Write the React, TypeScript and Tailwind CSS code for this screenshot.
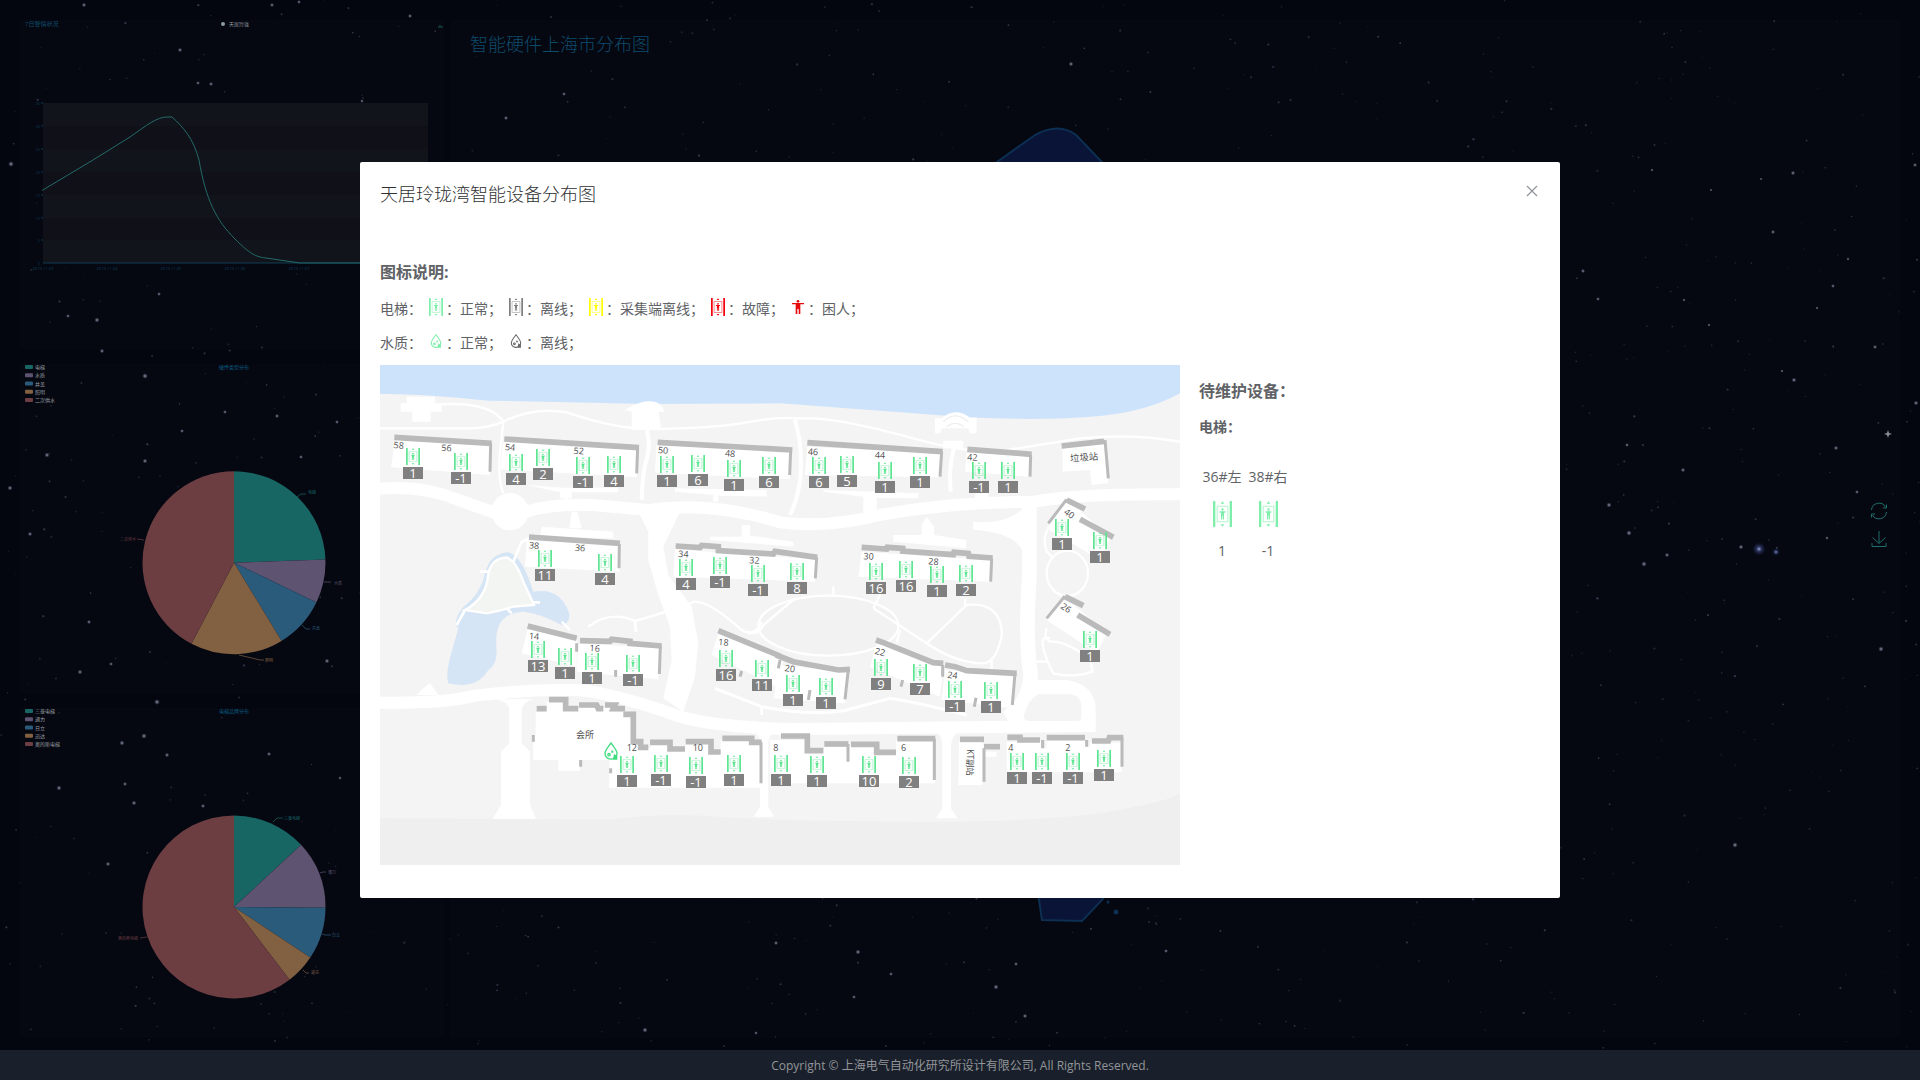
import React from "react";

const FONT = "font-['Open_Sans','Noto_Sans_CJK_SC',sans-serif]";

/* ---------- icons ---------- */

function ElevatorIcon({ className }: { className: string }) {
  return (
    <svg viewBox="0 0 57 76" preserveAspectRatio="none" className={className} fill="currentColor" aria-hidden="true">
      <rect x="0" y="0" width="7" height="76" />
      <rect x="50" y="0" width="7" height="76" />
      <path d="M11 14H46V62H11ZM14 17V59H43V17Z" opacity="0.6" />
      <path d="M28.5 1L34 8H23ZM28.5 75L34 68H23Z" />
      <circle cx="28.500" cy="25" r="3.500" />
      <path d="M20 30H37V34H33V54H29.500V43H27.500V54H24V34H20Z" />
    </svg>
  );
}

function DropIcon({ className }: { className: string }) {
  return (
    <svg viewBox="0 0 42 54" className={className} fill="none" stroke="currentColor" strokeWidth="4" aria-hidden="true">
      <path d="M21 3C11 16 3 25 3 34A17 17 0 0 0 21 51.500A17 17 0 0 0 39 34C39 25 31 16 21 3Z" />
      <circle cx="15" cy="38" r="3.500" />
      <circle cx="25" cy="29" r="1.500" />
      <path d="M30 36L40 42V53H27Z" fill="currentColor" stroke="none" />
    </svg>
  );
}

function PersonIcon({ className }: { className: string }) {
  return (
    <svg viewBox="0 0 36 42" className={className} fill="currentColor" aria-hidden="true">
      <circle cx="18" cy="4" r="4" />
      <path d="M0 9H36V13H25V42H20V27H16V42H11V13H0Z" />
    </svg>
  );
}

/* ---------- background sky ---------- */

const KNOWN_STARS: [number, number, number][] = [
  [1583, 271, 1.4], [1793, 173, 1.5], [1773, 232, 1.4], [1761, 179, 1], [1711, 190, 1], [1833, 286, 1.3],
  [1817, 308, 1.1], [1794, 380, 1.6], [1782, 371, 1.1], [1875, 347, 1.4], [1836, 448, 1.5], [1627, 445, 1.3],
  [1683, 470, 1.5], [1609, 505, 1.7], [1629, 533, 1.8], [1667, 555, 1.5], [1644, 564, 1.8], [1741, 547, 1.6],
  [1857, 492, 1.3], [1827, 538, 1.2], [1916, 403, 1.6], [1684, 300, 1.1], [1709, 325, 1.1], [1598, 299, 1.3],
  [1848, 259, 1.1], [1652, 170, 1.1], [1915, 165, 1.4], [180, 50, 1.5], [84, 5, 1.5], [272, 5, 1.4],
  [299, 2, 1.3], [410, 16, 1.4], [198, 83, 1.3], [211, 84, 1.4], [88, 106, 1.5], [142, 137, 1.2], [192, 150, 1.6],
  [261, 194, 1.4], [11, 164, 1.9], [59, 231, 1.8], [97, 320, 1.7], [68, 316, 1.3], [349, 141, 1.2], [311, 105, 1.3],
  [362, 101, 1.2], [159, 294, 1.3], [207, 219, 1.3], [145, 376, 1.9], [102, 351, 1.5], [225, 412, 1.3],
  [277, 416, 1.4], [337, 422, 1.3], [301, 457, 1.3], [145, 461, 1.6], [47, 455, 1.7], [10, 488, 1.7], [30, 534, 1.5],
  [89, 622, 1.4], [111, 664, 1.3], [80, 672, 1.6], [327, 661, 1.6], [182, 431, 1.3], [157, 702, 1.9], [144, 736, 1.8],
  [122, 743, 1.7], [167, 755, 1.5], [59, 788, 1.7], [134, 803, 1.6], [203, 806, 1.4], [125, 784, 1.4],
  [108, 864, 1.5], [269, 754, 1.4], [340, 778, 1.2], [858, 952, 1.7], [996, 987, 1.7], [776, 943, 1.4],
  [891, 974, 1.3], [1016, 964, 1.3], [854, 997, 1.3], [756, 1033, 1.2], [1166, 951, 1.3], [645, 1030, 1.7],
  [1735, 845, 1.8], [1881, 649, 1.8], [1025, 1016, 1.5], [1071, 64, 1.6], [564, 94, 1.3], [506, 118, 1.4],
];

function makeStars(count: number): [number, number, number, number][] {
  let seed = 20191;
  const next = () => {
    seed = (seed * 16807) % 2147483647;
    return seed / 2147483647;
  };
  return Array.from({ length: count }, () => [next() * 1920, next() * 1050, 0.5 + next() * 0.7, 0.15 + next() * 0.4]);
}

const DUST = makeStars(1300);

function Sky() {
  return (
    <svg
      className="absolute inset-0 h-full w-full"
      viewBox="0 0 1920 1080"
      preserveAspectRatio="xMidYMid slice"
      aria-hidden="true"
    >
      <defs>
        <radialGradient id="star">
          <stop offset="0" stopColor="#9aa1b2" />
          <stop offset="0.4" stopColor="#626a7c" stopOpacity="0.7" />
          <stop offset="1" stopColor="#3a4256" stopOpacity="0" />
        </radialGradient>
        <radialGradient id="nebula">
          <stop offset="0" stopColor="#9aa6d0" />
          <stop offset="0.35" stopColor="#3a4680" stopOpacity="0.7" />
          <stop offset="1" stopColor="#141c44" stopOpacity="0" />
        </radialGradient>
      </defs>
      {DUST.map(([x, y, r, o], i) => (
        <circle key={i} cx={x} cy={y} r={r} fill="#5a6580" opacity={o} />
      ))}
      {KNOWN_STARS.map(([x, y, r], i) => (
        <circle key={i} cx={x} cy={y} r={r * 1.6} fill="url(#star)" />
      ))}
      <circle cx="1759" cy="549" r="7" fill="url(#nebula)" />
      <circle cx="1776" cy="552" r="4" fill="url(#nebula)" />
      <path d="M1888 430L1889 433L1892 434L1889 435L1888 438L1887 435L1884 434L1887 433Z" fill="#8b8f98" />
    </svg>
  );
}

/* ---------- charts ---------- */

const PANEL = "rounded-sm bg-white/[0.008]";

function LineChart() {
  const bands = [103, 126, 149, 172, 195, 218, 240];
  const days = ["03", "04", "05", "06", "07"];
  return (
    <section className={PANEL}>
      <svg viewBox="20 20 424 330" className={`block w-full ${FONT}`} role="img" aria-label="7日警情状况">
        <text x="25" y="26" fontSize="6" fill="#0f4f6e">7日警情状况</text>
        <circle cx="223" cy="24" r="2" fill="#8d9c9c" />
        <text x="229" y="26" fontSize="5" fill="#9a9fa2">天居玲珑</text>
        <path d="M438 27H443M440 25V26" stroke="#1d5a58" strokeWidth="1" />
        {bands.map((y, i) => (
          <rect key={y} x="43" y={y} width="385" height="23" fill={i % 2 ? "#0f1018" : "#12141b"} />
        ))}
        {bands.map((y, i) => (
          <g key={y}>
            <path d={`M41 ${y}H43`} stroke="#0c3a56" />
            <text x="40" y={y + 2} fontSize="4" textAnchor="end" fill="#0c3a56">{35 - i * 5}</text>
          </g>
        ))}
        <text x="40" y="265" fontSize="4" textAnchor="end" fill="#0c3a56">0</text>
        <path d="M43 263H428" fill="none" stroke="#0f3c50" />
        {days.map((d, i) => (
          <text key={d} x={43 + i * 64} y="270" fontSize="4" textAnchor="middle" fill="#0f4259">2019-11-{d}</text>
        ))}
        <path
          d="M42 190.500L93 160L130 137C147 125 157 117 167 117L172 117C184 128 193 138 199 160C206 200 216 220 235 239C250 254 256 257 266 258L300 263H428"
          fill="none"
          stroke="#236a68"
        />
      </svg>
    </section>
  );
}

type Slice = { name: string; color: string; to: number; line: string; x: number; y: number };

function point(cx: number, cy: number, r: number, deg: number) {
  const a = ((deg - 90) * Math.PI) / 180;
  return `${(cx + r * Math.cos(a)).toFixed(2)} ${(cy + r * Math.sin(a)).toFixed(2)}`;
}

function PieChart({ title, slices, top, cy }: { title: string; slices: Slice[]; top: number; cy: number }) {
  return (
    <section className={PANEL}>
      <svg viewBox={`20 ${top} 424 330`} className={`block w-full ${FONT}`} role="img" aria-label={title}>
        {slices.map((s, i) => (
          <g key={s.name}>
            <rect x="25" y={top + 1 + i * 8.25} width="8" height="4" rx="1" fill={s.color} />
            <text x="35" y={top + 5 + i * 8.25} fontSize="5" fill="#9a9fa2">{s.name}</text>
          </g>
        ))}
        <text x="234" y={top + 5} fontSize="5" textAnchor="middle" fill="#0b5f84">{title}</text>
        {slices.map((s, i) => {
          const from = i ? slices[i - 1].to : 0;
          const large = s.to - from > 180 ? 1 : 0;
          return (
            <g key={s.name}>
              <path
                d={`M234 ${cy}L${point(234, cy, 91.5, from)}A91.5 91.5 0 ${large} 1 ${point(234, cy, 91.5, s.to)}Z`}
                fill={s.color}
              />
              <path d={s.line} fill="none" stroke={s.color} strokeWidth="0.7" />
              <text x={s.x} y={s.y} fontSize="4" fill={s.color}>{s.name}</text>
            </g>
          );
        })}
      </svg>
    </section>
  );
}

const TYPES: Slice[] = [
  { name: "电梯", color: "#186664", to: 88, line: "M297 497L301 494H306", x: 308, y: 494 },
  { name: "水质", color: "#5e5370", to: 115.8, line: "M324 582H331", x: 334, y: 585 },
  { name: "井盖", color: "#2b5b7b", to: 148.7, line: "M302 625L306 629H310", x: 312, y: 630 },
  { name: "照明", color: "#826042", to: 207.7, line: "M239 655L260 660H264", x: 265, y: 662 },
  { name: "二次供水", color: "#6c3e42", to: 360, line: "M144 540L137 539", x: 120, y: 541 },
];

const BRANDS: Slice[] = [
  { name: "三菱电梯", color: "#186664", to: 47.2, line: "M273 822L277 818H283", x: 284, y: 820 },
  { name: "通力", color: "#5e5370", to: 90.4, line: "M320 873L323 872H326", x: 328, y: 874 },
  { name: "日立", color: "#2b5b7b", to: 123.5, line: "M322 934L325 935H331", x: 332, y: 937 },
  { name: "迅达", color: "#826042", to: 142.6, line: "M303 970L306 973H309", x: 311, y: 974 },
  { name: "奥的斯电梯", color: "#6c3e42", to: 360, line: "M147 937L140 938", x: 118, y: 940 },
];

/* ---------- estate map ---------- */

const DEVICES: [number, number, string][] = [
  [23, 102, "1"], [71, 107, "-1"], [126, 108, "4"], [153, 103, "2"], [193, 111, "-1"], [224, 110, "4"],
  [277, 110, "1"], [308, 109, "6"], [344, 114, "1"], [379, 111, "6"], [155, 204, "11"], [215, 208, "4"],
  [296, 213, "4"], [330, 211, "-1"], [368, 219, "-1"], [407, 217, "8"], [429, 111, "6"], [457, 110, "5"],
  [495, 116, "1"], [530, 111, "1"], [589, 116, "-1"], [618, 116, "1"], [486, 217, "16"], [516, 215, "16"],
  [547, 220, "1"], [576, 219, "2"], [672, 173, "1"], [710, 186, "1"], [148, 295, "13"], [175, 302, "1"],
  [202, 307, "1"], [243, 309, "-1"], [336, 304, "16"], [372, 314, "11"], [403, 329, "1"], [436, 332, "1"],
  [491, 313, "9"], [530, 318, "7"], [565, 335, "-1"], [601, 336, "1"], [700, 285, "1"], [237, 410, "1"],
  [271, 409, "-1"], [306, 411, "-1"], [344, 409, "1"], [391, 409, "1"], [427, 410, "1"], [479, 410, "10"],
  [519, 411, "2"], [627, 407, "1"], [652, 407, "-1"], [683, 407, "-1"], [714, 404, "1"],
];

const LABELS: [number, number, string, number][] = [
  [40, 249, "58", 5], [183, 257, "56", 5], [374, 255, "54", 5], [580, 266, "52", 5], [833, 264, "50", 5],
  [1034, 274, "48", 5], [446, 550, "38", 5], [584, 557, "36", 5], [894, 576, "34", 3], [1107, 595, "32", 3],
  [1283, 269, "46", 3], [1484, 279, "44", 3], [1761, 286, "42", 3], [1450, 583, "30", 3], [1644, 598, "28", 5],
  [2050, 445, "40", 35], [2040, 728, "26", 35], [446, 822, "14", 5], [628, 858, "16", 5], [1014, 840, "18", 5],
  [1213, 918, "20", 8], [1483, 866, "22", 15], [1701, 938, "24", 8], [740, 1158, "12", 0], [938, 1158, "10", 0],
  [1180, 1158, "8", 0], [1563, 1158, "6", 0], [1885, 1158, "4", 0], [2056, 1158, "2", 0],
];

const ROOFS = [
  /* north row */
  "M43 217L335 235", "M373 222L777 248", "M833 232L1237 255", "M1282 233L1688 260", "M1762 253L1955 268",
  "M2045 243L2172 229",
  /* middle row */
  "M447 516L720 535",
  "M887 543L960 548L965 541L1015 545L1015 557L1180 567L1185 559L1312 577",
  "M1445 547L1520 552L1522 547L1568 550L1568 558L1720 569L1722 562L1765 565L1767 574L1838 579",
  "M2060 405L2115 432", "M2100 463L2200 517", "M2055 695L2110 722", "M2093 750L2190 808",
  /* curved row */
  "M443 783L500 797L590 820", "M600 827L690 829L695 823L750 829L750 835L845 843",
  "M1015 797L1200 873", "M1188 870L1240 890L1375 915L1410 913",
  "M1488 825L1510 833L1660 893L1690 895", "M1695 900L1725 905L1760 917L1910 925",
  /* club house and south row */
  "M470 1031H500", "M507 1004H557V1031H595", "M597 1020H650L655 1031H670", "M675 1020H705L700 1031H735",
  "M730 1048H760V1130H782V1147H805",
  "M810 1132H870V1152H915", "M917 1130H993V1161H1022", "M1027 1120H1115V1132H1145",
  "M1203 1113H1282V1157H1330", "M1333 1137H1405", "M1413 1138H1490V1162H1548", "M1552 1121H1666",
  "M1740 1123H1812", "M1812 1145H1860", "M1882 1117H1920V1125H1980", "M2000 1118H2115", "M2136 1128H2185L2188 1118H2230",
];

const SIDES =
  "M332 235L330 320M773 248L770 325M1232 255L1229 330M1685 260L1680 335M1952 270L1950 335M2175 225L2185 340" +
  "M718 537L717 610M1310 577L1306 640M1835 580L1832 650M2005 475L2060 403M2000 760L2055 693" +
  "M841 843L838 927M1405 913L1395 1003M1905 925L1897 1020M1143 1132V1255M1404 1137V1190M1663 1121V1245" +
  "M1812 1150V1250M1988 1125V1150M2120 1125V1145M2226 1118V1205M590 835V860M1200 885L1195 910M1688 900V935" +
  "M460 1110V1130M602 1185V1205M692 1210V1225M707 915V935M1085 918L1080 935M1290 975L1285 1005M1568 945L1563 965M1788 998L1783 1025";

const BODIES = [
  "M45 225L335 240L330 330L33 307Z", "M370 230L775 250L770 337L360 313Z", "M830 240L1235 260L1230 343L825 323Z",
  "M1282 245L1688 265L1680 337L1275 330Z", "M1760 260L1955 275L1948 335L1755 320Z",
  "M2048 247L2172 235L2185 355L2135 360L2130 315L2048 320Z", "M440 525L720 537L718 620L435 605Z",
  "M885 553L1310 583L1305 650L880 635Z", "M1445 560L1835 585L1830 650L1435 635Z",
  "M2060 405L2110 445L2190 520L2160 585L2000 490Z", "M2050 700L2100 735L2180 805L2150 865L2000 765Z",
  "M443 793L590 825L590 905L425 865Z", "M595 835L840 850L835 943L590 920Z",
  "M1015 803L1210 885L1190 965L995 870Z", "M1200 900L1405 920L1395 1015L1180 1000Z",
  "M1490 835L1690 905L1680 995L1470 905Z", "M1695 915L1905 935L1895 1030L1685 1005Z",
  "M467 1040H500V1010H553V1035H595V1028H690V1040H735V1055H760V1185H600V1217H535V1185H460V1110H467Z",
  "M690 1135H790V1150H812V1137H870V1157H915V1135H993V1165H1022V1125H1145V1268H687Z",
  "M1170 1125H1280V1162H1332V1142H1490V1165H1548V1125H1665V1255H1170Z",
  "M1737 1130H1810V1160H1850V1175H1808V1260H1735Z", "M1880 1130H1985V1150H2000V1123H2115V1145H2130V1133H2225V1222H1880Z",
];

function SitePlan() {
  return (
    <svg viewBox="0 0 2400 1500" className={`absolute inset-0 h-full w-full ${FONT}`} role="img" aria-label="小区平面图">
      <defs>
        <filter id="soft" x="-2%" y="-2%" width="104%" height="104%">
          <feGaussianBlur stdDeviation="2" />
        </filter>
      </defs>
      <rect width="2400" height="1500" fill="#f4f4f4" />
      <path d="M0 0H2400V85Q2300 140 2160 153Q2000 168 1760 157L1200 115L805 117L325 107Q120 85 0 87Z" fill="#cde3fb" />
      <path d="M0 1360L700 1363Q885 1340 1050 1358L1245 1366L1600 1370Q1950 1372 2160 1345Q2370 1310 2400 1285V1500H0Z" fill="#efefef" />

      {/* ponds */}
      <path d="M315 625Q330 565 385 562Q425 570 460 680Q540 665 568 745Q570 775 545 780Q480 745 430 740C350 745 345 800 350 860Q350 900 325 915Q290 975 205 955Q195 930 215 860L235 790Q215 770 250 725Q300 690 315 625Z" fill="#d5e5f5" />
      <path d="M325 625Q335 580 380 577Q410 590 430 650L462 720L400 725Q350 740 320 745L255 735Q320 700 325 625Z" fill="#f3f5f3" stroke="#fff" strokeWidth="7" />
      <path d="M300 620H325M400 590L425 530L470 510M455 712H480M380 730L395 745M255 735L230 780" fill="none" stroke="#fff" strokeWidth="8" />

      {/* roads */}
      <g fill="none" stroke="#fff" strokeWidth="36">
        <path d="M0 371Q130 360 235 405L335 440H440Q520 415 635 420L805 435Q900 422 985 430Q1100 440 1200 472Q1340 490 1500 450Q1700 412 1960 410Q2100 385 2400 388" />
        <path d="M0 1013Q200 1015 285 992Q450 972 600 976Q700 985 885 1050Q1000 1088 1245 1092L2140 1083" />
        <path d="M1948 415V640Q1935 820 1952 930Q1950 1010 1880 1060" strokeWidth="44" />
      </g>
      <circle cx="390" cy="440" r="56" fill="#fff" />
      <path d="M770 430L805 500L805 585L835 690L870 785L875 885L850 1000L910 1040L945 935L955 835L935 725L865 630L850 545L900 440Z" fill="#fff" />
      <path d="M1780 470Q1880 480 1930 430V560Q1900 500 1780 495Z" fill="#fff" />
      <path d="M1965 945H2060Q2145 960 2147 1030V1100H1860Z" fill="#fff" />
      <path d="M1975 988H2070Q2104 992 2104 1025V1055Q2104 1068 2090 1068H1945Q1925 1065 1935 1040Q1950 1000 1975 988Z" fill="#f4f4f4" />
      <path d="M345 1003Q390 1010 388 1040V1135L363 1160V1320L338 1362H468L450 1320V1160L425 1135V1040Q425 1010 460 1003Z" fill="#fff" />
      <path d="M1125 1100Q1140 1115 1140 1130V1325L1120 1355H1182L1165 1325V1130Q1168 1110 1185 1100Z" fill="#fff" />
      <path d="M1670 1100Q1687 1115 1687 1140V1330L1668 1360H1732L1713 1330V1140Q1715 1115 1735 1100Z" fill="#fff" />

      {/* footpaths */}
      <g fill="none" stroke="#fff" strokeWidth="7">
        <path d="M0 190H260Q330 190 370 170Q330 110 185 118M370 170Q460 125 560 142Q700 190 805 192Q1000 190 1100 172T1245 160H1300Q1400 165 1600 220T1900 252L2100 220Q2260 205 2400 230" />
        <path d="M370 170L358 280Q355 350 370 385" />
        <path d="M800 195Q815 240 795 300Q785 360 785 405M1245 165Q1270 250 1260 350Q1250 410 1230 450M1725 240Q1705 300 1712 380" strokeWidth="12" />
        <ellipse cx="1345" cy="782" rx="210" ry="90" fill="#f2f2f2" />
        <path d="M1640 835L1760 720Q1860 710 1866 805Q1850 900 1800 895Q1720 890 1640 835Z" fill="#f2f2f2" />
        <path d="M1480 730L1640 835M1480 730L1505 680M1360 665V692M1560 795L1550 835M1755 700V720M1835 880V925" />
        <path d="M625 785Q690 735 765 768Q850 745 945 710Q990 710 1085 795Q1130 820 1150 780L1245 700M545 770L570 795M1145 770Q1130 810 1100 800" />
        <path d="M765 768L768 800M1005 970L1145 1025Q1300 1055 1400 1035L1530 1000Q1600 1010 1760 1050M1145 1025V1050" strokeWidth="9" />
        <ellipse cx="2062" cy="625" rx="62" ry="68" />
        <path d="M2005 490Q1985 520 2000 560L2020 580M2000 790Q1990 820 2010 830Q2050 825 2130 880L2138 920Q2080 940 2020 925Q2000 890 1990 850T2010 820M1965 890H2000" />
      </g>

      {/* pavilions and terraces */}
      <g fill="#fff">
        <path d="M80 95H165V115H185V140H152V170H97V140H62V115H80Z" />
        <path d="M735 135Q760 118 785 112Q805 105 830 112Q850 122 852 140H835L845 195H755V140Z" />
        <path d="M1665 160H1685Q1725 125 1770 158H1790V205H1770L1765 190H1685L1680 205H1665Z" />
        <path d="M485 485L700 500V520L480 515ZM575 440H592L605 490H568ZM540 370H575V400H562V410H552V400H540Z" />
        <path d="M885 370L1160 375V395L1015 392V410H1000V390L885 380ZM990 525V515H1085V480H1110V512L1240 530V545Z" />
        <path d="M1330 375L1615 385V400L1490 398V450H1450V395L1330 380ZM1540 520V510H1625V480L1640 455L1662 485V510L1758 525V550L1540 530Z" />
        <path d="M1690 227H1750V250H1690ZM1785 375H1825V410H1785ZM130 970L150 955L175 990H110Z" />
        <path d="M440 360L550 368H715V382H540Z" />
      </g>
      <path d="M1690 170Q1725 135 1765 170M1700 185Q1725 165 1752 185" fill="none" stroke="#eee" strokeWidth="4" />

      {/* buildings */}
      <g fill="#fff">
        {BODIES.map((d) => (
          <path key={d} d={d} />
        ))}
      </g>
      <g fill="none" stroke="#bababa" filter="url(#soft)">
        <path d={SIDES} strokeWidth="9" />
        {ROOFS.map((d) => (
          <path key={d} d={d} strokeWidth="17" />
        ))}
      </g>

      <g fill="#4f4f4f" fontSize="27">
        {LABELS.map(([x, y, t, r]) => (
          <text key={t} x={x} y={y} transform={`rotate(${r} ${x} ${y})`}>{t}</text>
        ))}
        <text x="588" y="1120">会所</text>
        <text x="2071" y="290" fontSize="28" transform="rotate(-4 2071 290)">垃圾站</text>
        <text x="1762" y="1153" fontSize="25" transform="rotate(90 1762 1153)">KT副站</text>
      </g>
    </svg>
  );
}

function EstateMap() {
  return (
    <div className="relative h-[500px] w-[800px] shrink-0 overflow-hidden">
      <SitePlan />
      {DEVICES.map(([x, y, floor]) => (
        <div
          key={`${x}-${y}`}
          className="absolute flex w-5 -translate-y-full flex-col items-center text-[#5ee592]"
          style={{ left: x, top: y + 12 }}
        >
          <ElevatorIcon className="mb-0.5 h-[17px] w-[14px]" />
          <span className="h-3 w-full bg-[#808080] text-center text-[13px] leading-3 text-white">{floor}</span>
        </div>
      ))}
      <DropIcon className="absolute top-[377px] left-[224px] h-[18px] w-[14px] text-[#3fdc7f]" />
    </div>
  );
}

/* ---------- dialog ---------- */

const GREEN = "text-[#7eefaa]";

function LegendItem({ children, label }: { children: React.ReactNode; label: string }) {
  return (
    <li className="flex">
      <span className="mr-[3px] ml-[7px] flex h-[30px] w-3.5 items-center justify-center">{children}</span>：{label}；
    </li>
  );
}

function PendingDevice({ name, floor }: { name: string; floor: string }) {
  return (
    <li className="flex w-[46px] flex-col items-center text-sm leading-6 whitespace-nowrap">
      <span>{name}</span>
      <ElevatorIcon className={`mt-3 mb-3 h-[26px] w-[19px] ${GREEN}`} />
      <span>{floor}</span>
    </li>
  );
}

function DeviceDialog() {
  return (
    <div
      role="dialog"
      aria-labelledby="dialog-title"
      className="w-5/8 min-w-[1060px] rounded-xs bg-white text-[#606266]"
    >
      <header className="flex items-start justify-between p-5 pb-2.5">
        <h2 id="dialog-title" className="text-lg leading-6 font-light text-[#303133]">天居玲珑湾智能设备分布图</h2>
        <button type="button" aria-label="关闭" className="mt-[3px] mr-0.5 text-[#909399]">
          <svg viewBox="0 0 12 12" className="h-3 w-3" stroke="currentColor" strokeWidth="1.200">
            <path d="M1 1L11 11M11 1L1 11" />
          </svg>
        </button>
      </header>
      <div className="px-5 pt-11 pb-[33px]">
        <h3 className="mb-2 text-base leading-6 font-bold">图标说明:</h3>
        <div className="flex text-sm leading-[34px]">
          <span>电梯：</span>
          <ul className="flex">
            <LegendItem label="正常"><ElevatorIcon className={`h-[18px] w-3.5 ${GREEN}`} /></LegendItem>
            <LegendItem label="离线"><ElevatorIcon className="h-[18px] w-3.5 text-[#808080]" /></LegendItem>
            <LegendItem label="采集端离线"><ElevatorIcon className="h-[18px] w-3.5 text-[#ffff00]" /></LegendItem>
            <LegendItem label="故障"><ElevatorIcon className="h-[18px] w-3.5 text-[#f5000c]" /></LegendItem>
            <LegendItem label="困人"><PersonIcon className="h-3.5 w-3 text-[#e60c0c]" /></LegendItem>
          </ul>
        </div>
        <div className="mb-[5px] flex text-sm leading-[34px]">
          <span>水质：</span>
          <ul className="flex">
            <LegendItem label="正常"><DropIcon className={`h-3.5 w-3 ${GREEN}`} /></LegendItem>
            <LegendItem label="离线"><DropIcon className="h-3.5 w-3 text-[#666]" /></LegendItem>
          </ul>
        </div>
        <div className="flex">
          <EstateMap />
          <aside className="pl-[19px]">
            <h3 className="mt-3.5 text-base leading-6 font-bold">待维护设备：</h3>
            <h4 className="mt-3 mb-[26px] text-sm leading-6 font-bold">电梯：</h4>
            <ul className="flex">
              <PendingDevice name="36#左" floor="1" />
              <PendingDevice name="38#右" floor="-1" />
            </ul>
          </aside>
        </div>
      </div>
    </div>
  );
}

/* ---------- page ---------- */

function RegionPanel() {
  return (
    <section className={`relative min-w-0 flex-1 ${PANEL}`}>
      <svg viewBox="450 20 1450 1018" className="absolute inset-0 h-full w-full" aria-hidden="true">
        <path
          d="M940 230L997 162L1035 135Q1059 122 1076 135L1102 162L1160 260L1220 500L1180 780L1102 900L1082 921L1042 920L1036 880L960 600Z"
          fill="#0a1437"
          stroke="#0c2f52"
          strokeWidth="2"
        />
        <circle cx="1116" cy="912" r="2.500" fill="#0c2f52" />
        <circle cx="1108" cy="902" r="1.500" fill="#0c2f52" />
      </svg>
      <div className="relative flex h-full items-center justify-between pr-3 pb-2 pl-5">
        <h1 className="self-start pt-3 text-lg leading-6 font-light text-[#0d4b6b]">智能硬件上海市分布图</h1>
        <div className="flex flex-col gap-2.5 text-[#1f6e6b]">
          <button type="button" aria-label="刷新">
            <svg viewBox="0 0 18 18" className="h-[18px] w-[18px]" fill="none" stroke="currentColor">
              <path d="M1.500 8A7.500 7.500 0 0 1 15.500 5M16.500 10A7.500 7.500 0 0 1 2.500 13M16.500 2.500V6H13M1.500 15.500V12H5" />
            </svg>
          </button>
          <button type="button" aria-label="保存为图片">
            <svg viewBox="0 0 18 18" className="h-[18px] w-[18px]" fill="none" stroke="currentColor">
              <path d="M9 1V13M2.500 7.500L9 13.500L15.500 7.500M2 13V16.500H16V13" />
            </svg>
          </button>
        </div>
      </div>
    </section>
  );
}

export default function App() {
  return (
    <div className={`relative flex min-h-screen flex-col overflow-hidden bg-[#03050f] ${FONT}`}>
      <Sky />
      <main className="relative flex flex-1 gap-1.5 p-5 pb-3">
        <div className="flex w-[424px] shrink-0 flex-col gap-3.5">
          <LineChart />
          <PieChart title="硬件类型分布" slices={TYPES} top={364} cy={562.7} />
          <PieChart title="电梯品牌分布" slices={BRANDS} top={708} cy={907} />
        </div>
        <RegionPanel />
      </main>
      <footer className="relative h-[30px] bg-[#19202b] text-center text-xs leading-8 text-[#939599]">
        Copyright © 上海电气自动化研究所设计有限公司, All Rights Reserved.
      </footer>
      <div className="absolute inset-0 flex items-start justify-center pt-[15vh]">
        <DeviceDialog />
      </div>
    </div>
  );
}
